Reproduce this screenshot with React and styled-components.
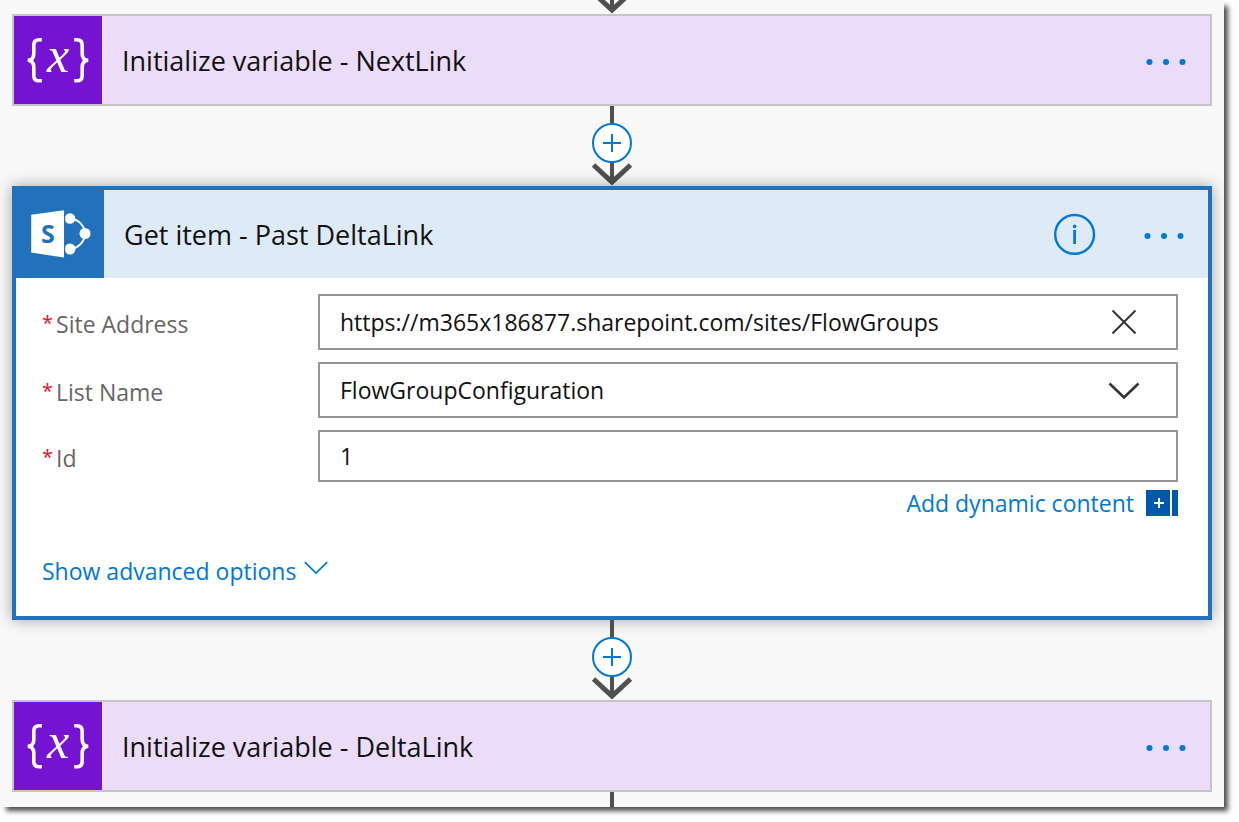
import React from "react";
import styled, { createGlobalStyle } from "styled-components";

const BracesIcon = () => (
	<svg width="88" height="88" viewBox="0 0 88 88" aria-hidden="true">
		<g fill="none" stroke="#fff" strokeWidth="3.6">
			<path d="M27.8 23.8h-2.6c-3.7 0-5.4 1.8-5.4 5.4v8.2c0 4.2-1.8 6.6-6 6.9 4.2.3 6 2.7 6 6.9v8.2c0 3.6 1.7 5.4 5.4 5.4h2.6" />
			<path d="M60.2 23.8h2.6c3.7 0 5.4 1.8 5.4 5.4v8.2c0 4.2 1.8 6.6 6 6.9-4.2.3-6 2.7-6 6.9v8.2c0 3.6-1.7 5.4-5.4 5.4h-2.6" />
		</g>
		<IconLetter x="44" y="56" $serif>
			x
		</IconLetter>
	</svg>
);

const SharePointIcon = () => (
	<svg width="88" height="88" viewBox="0 0 88 88" aria-hidden="true">
		<path d="M54 28.5A16 16 0 0 1 69 43.5A16 16 0 0 1 54 59" fill="none" stroke="#fff" strokeWidth="2" />
		<circle cx="54" cy="28.5" r="5.3" fill="#fff" />
		<circle cx="69" cy="43.5" r="5.5" fill="#fff" />
		<circle cx="54" cy="59" r="5.5" fill="#fff" />
		<path d="M49.2 18V70H46V18z" fill="#2172bb" />
		<path d="M15.2 24.8L48 20.3V67.6L15.2 62.6z" fill="#fff" />
		<IconLetter x="32" y="53">
			S
		</IconLetter>
	</svg>
);

const ArrowHead = () => (
	<svg width="44" height="23" viewBox="0 0 44 23" aria-hidden="true">
		<path d="M22 0V18" stroke="#505050" strokeWidth="4" />
		<path d="M3.5 2L22 19L40.5 2" fill="none" stroke="#505050" strokeWidth="5" />
	</svg>
);

const Dots = () => (
	<svg width="40" height="12" viewBox="0 0 40 12" aria-hidden="true">
		<g fill="#0078d7">
			<circle cx="3.5" cy="8" r="3" />
			<circle cx="20" cy="8" r="3" />
			<circle cx="36.5" cy="8" r="3" />
		</g>
	</svg>
);

const InfoIcon = () => (
	<svg width="42" height="42" viewBox="0 0 42 42" fill="none" aria-hidden="true">
		<circle cx="20.6" cy="21.4" r="19.4" stroke="#0078d7" strokeWidth="2.4" />
		<path d="M20.6 17V31" stroke="#0078d7" strokeWidth="2.8" />
		<circle cx="20.6" cy="13.4" r="1.8" fill="#0078d7" />
	</svg>
);

const Connector = () => (
	<ConnectorWrap>
		<Stem />
		<AddButton aria-label="Insert a new step">
			<svg width="18" height="18" viewBox="0 0 18 18" aria-hidden="true">
				<path d="M9 0V18M0 9H18" stroke="#0078d7" strokeWidth="2" />
			</svg>
		</AddButton>
		<ArrowHead />
	</ConnectorWrap>
);

const VariableCard = ({ title }) => (
	<Card>
		<CardHeader $color="#ebdcf9">
			<Tile $color="#7612d2">
				<BracesIcon />
			</Tile>
			<Title>{title}</Title>
			<IconButton aria-label="Menu">
				<Dots />
			</IconButton>
		</CardHeader>
	</Card>
);

const Field = ({ id, label, children }) => (
	<Row>
		<Label htmlFor={id}>
			<Required>*</Required>
			{label}
		</Label>
		{children}
	</Row>
);

const App = () => {
	const [site, setSite] = React.useState(
		"https://m365x186877.sharepoint.com/sites/FlowGroups"
	);
	const [itemId, setItemId] = React.useState("1");

	return (
		<>
			<GlobalStyle />
			<Canvas>
				<Incoming>
					<ArrowHead />
				</Incoming>

				<VariableCard title="Initialize variable - NextLink" />
				<Connector />

				<Card $active>
					<CardHeader $color="#deeaf6">
						<Tile $color="#2172bb">
							<SharePointIcon />
						</Tile>
						<Title>Get item - Past DeltaLink</Title>
						<IconButton aria-label="Info">
							<InfoIcon />
						</IconButton>
						<IconButton aria-label="Menu">
							<Dots />
						</IconButton>
					</CardHeader>

					<Body>
						<Field id="site" label="Site Address">
							<Box>
								<Input
									id="site"
									type="text"
									value={site}
									onChange={(e) => setSite(e.target.value)}
								/>
								<ClearButton aria-label="Clear" onClick={() => setSite("")}>
									<svg width="32" height="26" viewBox="0 0 32 26" aria-hidden="true">
										<path d="M4.5 1.5L27.5 24.5M27.5 1.5L4.5 24.5" stroke="#333" strokeWidth="2" />
									</svg>
								</ClearButton>
							</Box>
						</Field>

						<Field id="list" label="List Name">
							<Box>
								<Select id="list">
									<option>FlowGroupConfiguration</option>
								</Select>
								<SelectArrow width="32" height="18" viewBox="0 0 32 18" aria-hidden="true">
									<path d="M1.5 2.5L16 16.5L30.5 2.5" fill="none" stroke="#333" strokeWidth="2.6" />
								</SelectArrow>
							</Box>
						</Field>

						<Field id="item-id" label="Id">
							<Box $short>
								<Input
									id="item-id"
									type="text"
									value={itemId}
									onChange={(e) => setItemId(e.target.value)}
								/>
							</Box>
						</Field>

						<DynamicRow>
							<LinkButton $gap={12}>
								Add dynamic content
								<svg width="32" height="26" viewBox="0 0 32 26" aria-hidden="true">
									<path d="M0 0H24V26H0zM26 0H32V26H26z" fill="#0058ad" />
									<path d="M13 8V18M8 13H18" stroke="#fff" strokeWidth="2" />
								</svg>
							</LinkButton>
						</DynamicRow>

						<AdvancedRow>
							<LinkButton $gap={8}>
								Show advanced options
								<AdvancedArrow width="24" height="14" viewBox="0 0 24 14" aria-hidden="true">
									<path d="M.8 1.2L12 12L23.2 1.2" fill="none" stroke="#0078d7" strokeWidth="1.7" />
								</AdvancedArrow>
							</LinkButton>
						</AdvancedRow>
					</Body>
				</Card>
				<Connector />

				<VariableCard title="Initialize variable - DeltaLink" />
				<Stem $last />
			</Canvas>
		</>
	);
};

export default App;

const GlobalStyle = createGlobalStyle`
	* {
		box-sizing: border-box;
	}

	body {
		margin: 0;
		background: #fff;
		font-family: "Segoe UI", "Open Sans", sans-serif;
	}

	button, input, select {
		font: inherit;
	}

	svg {
		display: block;
		flex-shrink: 0;
	}
`;

const Canvas = styled.main`
	display: flex;
	flex-direction: column;
	align-items: center;
	margin: 0 15px 15px 0;
	padding: 0 12px;
	background: #f8f8f8;
	box-shadow: 5px 5px 5px -1px rgba(0, 0, 0, 0.7);
`;

const Incoming = styled.div`
	display: flex;
	align-items: flex-end;
	height: 14px;
	overflow: hidden;
`;

const ConnectorWrap = styled.div`
	display: flex;
	flex-direction: column;
	align-items: center;
`;

const Stem = styled.div`
	width: 4px;
	height: ${({ $last }) => ($last ? "15px" : "17px")};
	background: #505050;
`;

const AddButton = styled.button`
	display: flex;
	align-items: center;
	justify-content: center;
	width: 40px;
	height: 40px;
	padding: 0;
	border: 2px solid #0078d7;
	border-radius: 50%;
	background: #fff;
	cursor: pointer;
`;

const Card = styled.section`
	width: 100%;
	border: ${({ $active }) => ($active ? "4px solid #2172bb" : "2px solid #c5c5c5")};
	background: #fff;
	box-shadow: ${({ $active }) => ($active ? "0 0 14px rgba(0, 0, 0, 0.35)" : "none")};
`;

const CardHeader = styled.header`
	display: flex;
	align-items: center;
	height: 88px;
	padding-right: 24px;
	background: ${({ $color }) => $color};
`;

const Tile = styled.div`
	flex-shrink: 0;
	width: 88px;
	height: 88px;
	background: ${({ $color }) => $color};
`;

const IconLetter = styled.text`
	fill: ${({ $serif }) => ($serif ? "#fff" : "#2172bb")};
	font-family: ${({ $serif }) =>
		$serif ? '"Liberation Serif", serif' : '"Open Sans", sans-serif'};
	font-size: ${({ $serif }) => ($serif ? "50px" : "25px")};
	font-style: ${({ $serif }) => ($serif ? "italic" : "normal")};
	font-weight: ${({ $serif }) => ($serif ? 400 : 700)};
	text-anchor: middle;
`;

const Title = styled.h2`
	flex: 1;
	margin: 0;
	padding: 2px 20px 0;
	color: #111;
	font-size: 27px;
	font-weight: 400;
	line-height: 36px;
`;

const IconButton = styled.button`
	padding: 0;
	border: 0;
	background: none;
	cursor: pointer;

	& + & {
		margin-left: 48px;
	}
`;

const Body = styled.div`
	padding: 16px 30px 28px 26px;
`;

const Row = styled.div`
	display: flex;
	align-items: center;
	margin-bottom: 12px;
`;

const Label = styled.label`
	flex: 0 0 276px;
	padding-top: 4px;
	color: #666;
	font-size: 23px;
	line-height: 32px;
`;

const Required = styled.span`
	margin-right: 3px;
	color: #e81123;
	font-size: 20px;
	line-height: 20px;
	vertical-align: 3px;
`;

const Box = styled.div`
	position: relative;
	display: flex;
	align-items: center;
	flex: 1;
	height: ${({ $short }) => ($short ? "52px" : "56px")};
	border: 2px solid #969696;
	background: #fff;
`;

const Input = styled.input`
	flex: 1;
	min-width: 0;
	height: 100%;
	padding: 0 20px;
	border: 0;
	outline: 0;
	background: none;
	color: #111;
	font-size: 23px;
`;

const Select = styled.select`
	width: 100%;
	height: 100%;
	padding: 0 20px;
	border: 0;
	outline: 0;
	appearance: none;
	background: none;
	color: #111;
	font-size: 23px;
`;

const ClearButton = styled.button`
	margin-right: 36px;
	padding: 0;
	border: 0;
	background: none;
	cursor: pointer;
`;

const SelectArrow = styled.svg`
	position: absolute;
	right: 36px;
	pointer-events: none;
`;

const LinkButton = styled.button`
	display: flex;
	align-items: center;
	gap: ${({ $gap }) => $gap}px;
	padding: 0;
	border: 0;
	background: none;
	color: #0078d7;
	font-size: 23px;
	line-height: 26px;
	cursor: pointer;
`;

const DynamicRow = styled.div`
	display: flex;
	justify-content: flex-end;
	margin-top: -4px;
`;

const AdvancedRow = styled.div`
	display: flex;
	margin-top: 42px;
	padding-bottom: 4px;
`;

const AdvancedArrow = styled.svg`
	margin-bottom: 6px;
`;
